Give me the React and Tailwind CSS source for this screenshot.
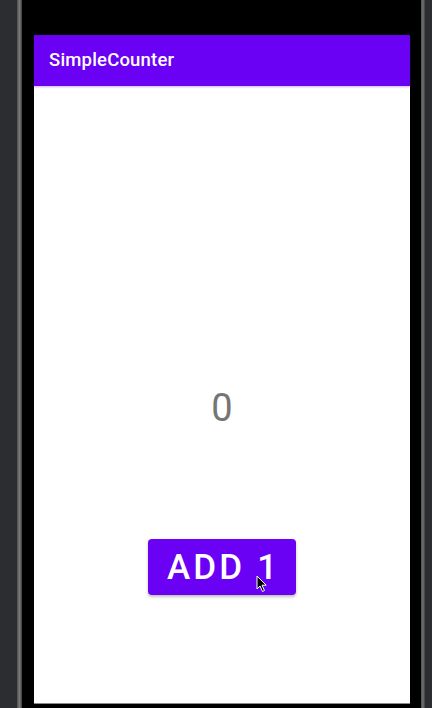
import React, { useState } from "react";

const Cursor = () => (
    <svg
        className="absolute left-[256px] top-[575px]"
        width="12"
        height="18"
        viewBox="0 0 12 18"
    >
        <path
            d="M1 1 L1 14 L4 11 L6.5 16.5 L8.5 15.5 L6 10.2 L10.2 10.2 Z"
            fill="#000"
            stroke="#fff"
            strokeWidth="1"
            strokeLinejoin="round"
        />
    </svg>
);

export default function App() {
    const [count, setCount] = useState(0);

    return (
        <div className="relative flex w-[432px] h-[708px] bg-[#2b2d30] overflow-hidden font-['Roboto',sans-serif]">
            <div className="w-[17px]" />
            <div className="w-[5px] bg-gradient-to-r from-[#4a4c4e] via-[#7a7c7e] to-[#3c3e40]" />
            <div className="flex bg-black pl-[12px] pr-[11px]">
                <div className="flex flex-col w-[376px]">
                    <div className="h-[35px] bg-black" />
                    <div className="h-[51px] bg-[#6a00f4] flex items-center pl-[15px] shadow-[0_1px_2px_rgba(98,0,238,0.3)] z-10">
                        <span className="text-white text-[18.5px] font-medium tracking-[0.01em]">SimpleCounter</span>
                    </div>
                    <div className="flex-1 bg-white flex flex-col items-center pt-[303px]">
                        <div className="text-[38px] leading-none text-[#757575]">{count}</div>
                        <button
                            onClick={() => setCount(count + 1)}
                            className="mt-[112px] w-[148px] h-[56px] rounded-[4px] bg-[#6a00f4] text-white text-[35px] font-medium tracking-[0.09em] pl-[0.09em] leading-none flex items-center justify-center shadow-[0_2px_3px_rgba(0,0,0,0.25)]"
                        >
                            ADD 1
                        </button>
                    </div>
                    <div className="h-px bg-[#8a8a8a]" />
                    <div className="h-[4px] bg-black" />
                </div>
            </div>
            <div className="w-[4px] bg-gradient-to-r from-[#4a4c4e] via-[#707274] to-[#3c3e40]" />
            <div className="flex-1" />
            <Cursor />
        </div>
    );
}
